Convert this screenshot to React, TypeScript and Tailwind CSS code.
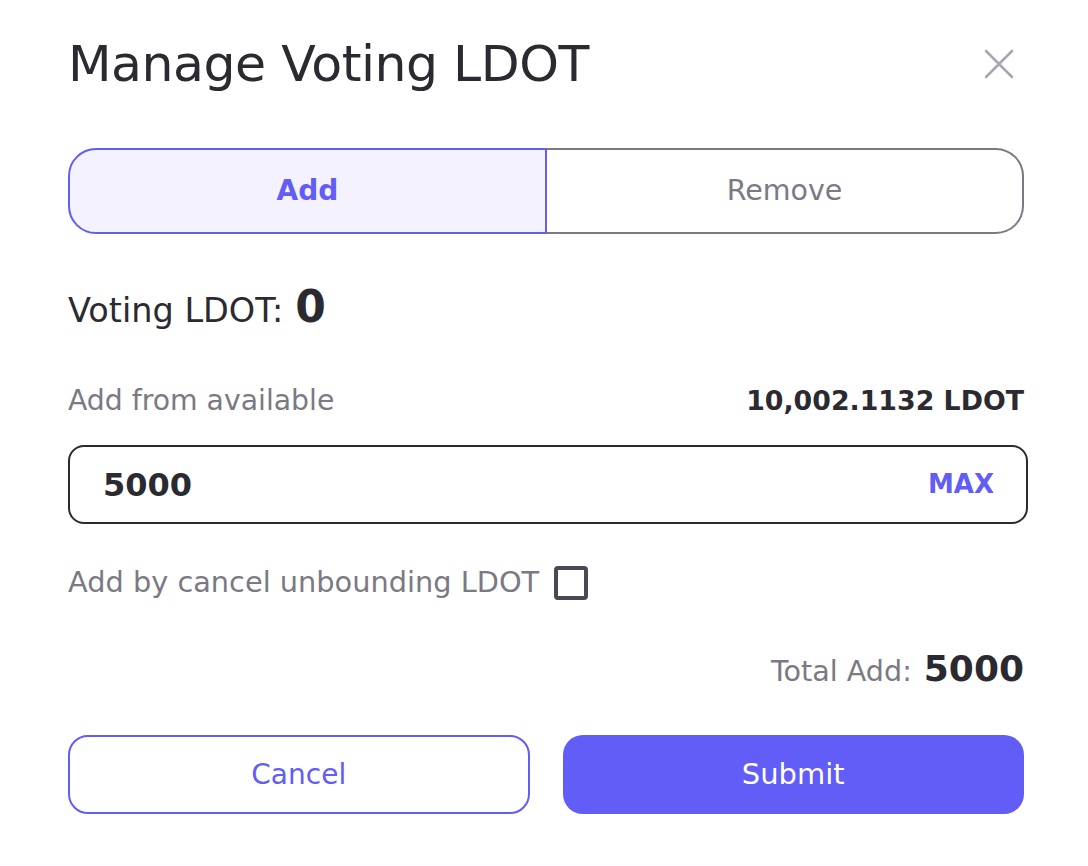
import { useState } from 'react'

export default function App() {
  const [tab, setTab] = useState<'add' | 'remove'>('add')
  const [amount, setAmount] = useState('5000')
  const [cancelUnbond, setCancelUnbond] = useState(false)

  return (
    <div
      className="w-[1088px] h-[866px] bg-white pl-[68px] pr-[64px] text-[#2b2a31]"
      style={{ fontFamily: '"DejaVu Sans", "Liberation Sans", sans-serif' }}
    >
      {/* Header */}
      <div className="flex items-center justify-between h-[64px] mt-[32px]">
        <h1 className="text-[50.5px] leading-none font-normal tracking-[-0.5px]">Manage Voting LDOT</h1>
        <button className="mr-[10px] text-[#a9a7b1]">
          <svg width="30" height="30" viewBox="0 0 30 30" fill="none" stroke="currentColor" strokeWidth="2.6" strokeLinecap="round">
            <path d="M2 2 L28 28 M28 2 L2 28" />
          </svg>
        </button>
      </div>

      {/* Add / Remove switch */}
      <div className="flex h-[86px] mt-[52px]">
        <button
          onClick={() => setTab('add')}
          className={
            tab === 'add'
              ? 'flex-1 flex items-center justify-center rounded-l-[28px] border-2 border-[#615df6] bg-[#f3f2fe] text-[#615df6] text-[28px] font-bold'
              : 'flex-1 flex items-center justify-center rounded-l-[28px] border-2 border-r-0 border-[#7b7983] text-[#7b7983] text-[28px]'
          }
        >
          Add
        </button>
        <button
          onClick={() => setTab('remove')}
          className={
            tab === 'remove'
              ? 'flex-1 flex items-center justify-center rounded-r-[28px] border-2 border-[#615df6] bg-[#f3f2fe] text-[#615df6] text-[28.5px] font-bold'
              : 'flex-1 flex items-center justify-center rounded-r-[28px] border-2 border-l-0 border-[#7b7983] text-[#7b7983] text-[28.5px]'
          }
        >
          Remove
        </button>
      </div>

      {/* Voting balance */}
      <div className="flex items-baseline h-[56px] mt-[47px] pt-[4px]">
        <span className="text-[33.5px]">Voting LDOT:</span>
        <span className="ml-[12px] text-[44px] font-bold leading-none">0</span>
      </div>

      {/* Available */}
      <div className="flex items-center justify-between mt-[47px] h-[34px]">
        <span className="text-[28.3px] text-[#7b7983]">Add from available</span>
        <span className="text-[26.8px] font-bold">10,002.1132 LDOT</span>
      </div>

      <div className="mr-[-4px] mt-[27px] h-[79px] flex items-center border-2 border-[#2b2a31] rounded-[16px] pl-[33px] pr-[32px]">
        <input
          value={amount}
          onChange={e => setAmount(e.target.value)}
          className="flex-1 bg-transparent outline-none text-[32px] font-bold text-[#2b2a31]"
        />
        <button className="text-[26px] font-bold text-[#615df6]">MAX</button>
      </div>

      {/* Cancel unbonding */}
      <div className="flex items-center mt-[42px] h-[34px]">
        <span className="text-[28.8px] text-[#7b7983]">Add by cancel unbounding LDOT</span>
        <button
          onClick={() => setCancelUnbond(v => !v)}
          className="ml-[15px] w-[34px] h-[34px] rounded-[4px] border-[4px] border-[#4a4852]"
        >
          {cancelUnbond && <span className="block w-full h-full bg-[#4a4852]" />}
        </button>
      </div>

      {/* Total */}
      <div className="flex items-baseline justify-end mt-[42px] h-[36px]">
        <span className="text-[28.6px] text-[#7b7983]">Total Add:</span>
        <span className="ml-[12px] text-[36px] font-bold">{amount}</span>
      </div>

      {/* Actions */}
      <div className="grid grid-cols-2 gap-[33px] mt-[57px]">
        <button className="h-[79px] rounded-[20px] border-2 border-[#615df6] text-[#615df6] text-[28px]">Cancel</button>
        <button className="h-[79px] rounded-[20px] bg-[#615df6] text-white text-[29px]">Submit</button>
      </div>
    </div>
  )
}
